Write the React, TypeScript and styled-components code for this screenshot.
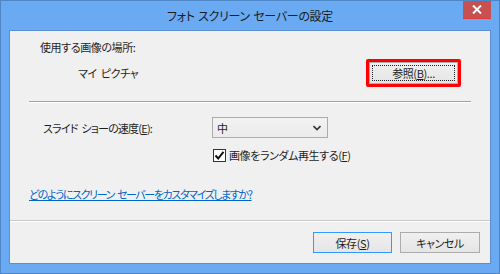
import styled, { createGlobalStyle } from 'styled-components';

const GlobalStyle = createGlobalStyle`
	*, *::before, *::after {
		box-sizing: border-box;
	}
	html, body {
		margin: 0;
		padding: 0;
		background: #6aaaf2;
	}
	body {
		font-family: 'Noto Sans CJK JP', 'Noto Sans', sans-serif;
		font-size: 11px;
		letter-spacing: -0.4px;
		word-spacing: 2px;
		font-feature-settings: 'palt' 1;
		color: #1e1e1e;
	}
`;

const Window = styled.div`
	width: 500px;
	height: 274px;
	background: #6aaaf2;
	border: 1px solid #4f86c6;
	display: flex;
	flex-direction: column;
	overflow: hidden;
`;

const TitleBar = styled.div`
	height: 29px;
	flex-shrink: 0;
	display: flex;
	align-items: flex-start;
	position: relative;
`;

const Title = styled.div`
	flex: 1;
	text-align: center;
	font-size: 12px;
	letter-spacing: -0.3px;
	word-spacing: 1px;
	line-height: 30px;
	color: #1c1c1c;
`;

const CloseButton = styled.div`
	position: absolute;
	top: -1px;
	right: 8px;
	width: 28px;
	height: 19px;
	background: #c75050;
	border-bottom: 1px solid #e03a3a;
	display: flex;
	align-items: center;
	justify-content: center;
`;

const Client = styled.div`
	margin: 0 8px 9px 8px;
	flex: 1;
	min-height: 0;
	background: #f0f0f0;
	border: 1px solid #5b8fcf;
	display: flex;
	flex-direction: column;
`;

const Main = styled.div`
	height: 189px;
	flex-shrink: 0;
	padding: 9px 19px 0 19px;
	display: flex;
	flex-direction: column;
`;

const Label = styled.div<{ $indent: number }>`
	margin-left: ${(p) => p.$indent}px;
	line-height: 15px;
	height: 15px;
	white-space: nowrap;
`;

const PictureRow = styled.div`
	margin-top: 4px;
	height: 28px;
	display: flex;
	align-items: center;
	justify-content: space-between;
	padding-right: 10px;
`;

const Highlight = styled.div`
	border: 3px solid #ff0000;
	border-radius: 2px;
	display: flex;
`;

const Button = styled.div<{ $width: number; $height: number; $default?: boolean }>`
	width: ${(p) => p.$width}px;
	height: ${(p) => p.$height}px;
	border: 1px solid ${(p) => (p.$default ? '#3399ff' : '#acacac')};
	background: linear-gradient(#f0f0f0, #e5e5e5);
	display: flex;
	align-items: center;
	justify-content: center;
	padding: 2px;
	color: #1e1e1e;
`;

const FocusRect = styled.div`
	flex: 1;
	align-self: stretch;
	border: 1px dotted #222;
	display: flex;
	align-items: center;
	justify-content: center;
`;

const Key = styled.span`
	text-decoration: underline;
	text-underline-offset: 1px;
`;

const Separator = styled.div`
	margin-top: 14px;
	height: 2px;
	border-top: 1px solid #a0a0a0;
	border-bottom: 1px solid #ffffff;
`;

const SpeedRow = styled.div`
	margin-top: 14px;
	height: 21px;
	display: flex;
	align-items: center;
`;

const SpeedLabel = styled.div`
	width: 183px;
	padding-left: 14px;
	letter-spacing: -0.8px;
	white-space: nowrap;
`;

const Select = styled.div`
	width: 116px;
	height: 21px;
	border: 1px solid #acacac;
	background: linear-gradient(#f2f2f2, #ebebeb);
	display: flex;
	align-items: center;
	justify-content: space-between;
	padding: 0 6px 0 4px;
`;

const CheckRow = styled.div`
	margin-top: 9px;
	height: 16px;
	margin-left: 184px;
	display: flex;
	align-items: center;
	gap: 3px;
	white-space: nowrap;
`;

const Box = styled.div`
	width: 13px;
	height: 13px;
	border: 1px solid #333;
	background: #fff;
	display: flex;
	align-items: center;
	justify-content: center;
`;

const HelpLink = styled.a`
	margin-top: 23px;
	line-height: 16px;
	letter-spacing: -1.4px;
	color: #0066cc;
	text-decoration: underline;
	white-space: nowrap;
`;

const Footer = styled.div`
	flex: 1;
	border-top: 1px solid #c8c8c8;
	box-shadow: inset 0 1px 0 #fff;
	display: flex;
	justify-content: flex-end;
	align-items: flex-start;
	gap: 8px;
	padding: 11px 10px 0 0;
`;

export default function App() {
	return (
		<>
			<GlobalStyle />
			<Window>
				<TitleBar>
					<Title>フォト スクリーン セーバーの設定</Title>
					<CloseButton>
						<svg width='10' height='9' viewBox='0 0 10 9'>
							<path d='M1 0.5 L9 8.5 M9 0.5 L1 8.5' stroke='#fff' strokeWidth='2' />
						</svg>
					</CloseButton>
				</TitleBar>
				<Client>
					<Main>
						<Label $indent={11}>使用する画像の場所:</Label>
						<PictureRow>
							<Label $indent={49}>マイ ピクチャ</Label>
							<Highlight>
								<Button $width={89} $height={22}>
									<FocusRect>
										参照(<Key>B</Key>)...
									</FocusRect>
								</Button>
							</Highlight>
						</PictureRow>
						<Separator />
						<SpeedRow>
							<SpeedLabel>
								スライド ショーの速度(<Key>E</Key>):
							</SpeedLabel>
							<Select>
								<span>中</span>
								<svg width='8' height='6' viewBox='0 0 8 6'>
									<path d='M0.5 1 L4 4.5 L7.5 1' stroke='#333' strokeWidth='1.6' fill='none' />
								</svg>
							</Select>
						</SpeedRow>
						<CheckRow>
							<Box>
								<svg width='11' height='11' viewBox='0 0 11 11'>
									<path d='M1.5 5.5 L4.2 8.5 L9.5 1.8' stroke='#111' strokeWidth='2' fill='none' />
								</svg>
							</Box>
							<span>
								画像をランダム再生する(<Key>F</Key>)
							</span>
						</CheckRow>
						<HelpLink>どのようにスクリーン セーバーをカスタマイズしますか?</HelpLink>
					</Main>
					<Footer>
						<Button $width={79} $height={21} $default>
							保存(<Key>S</Key>)
						</Button>
						<Button $width={80} $height={21}>
							キャンセル
						</Button>
					</Footer>
				</Client>
			</Window>
		</>
	);
}
